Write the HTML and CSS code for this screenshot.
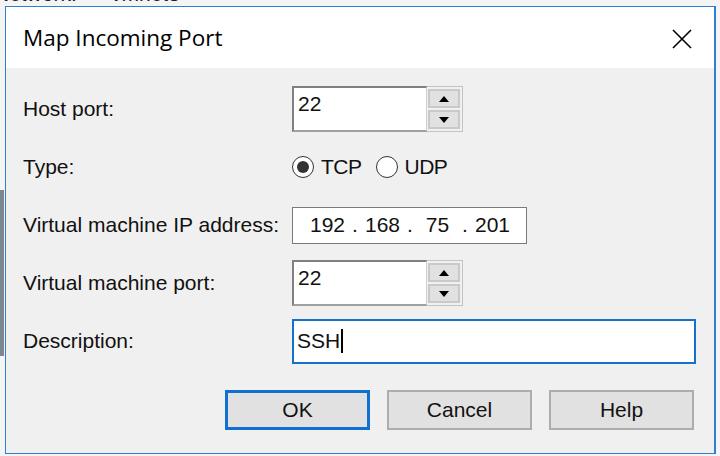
FILE: index.html
```html
<!DOCTYPE html>
<html lang="en">
<head>
  <meta charset="UTF-8" />
  <title>Map Incoming Port</title>
  <link rel="stylesheet" href="styles.css">
</head>
<body>

  <div class="desktop">
    <div class="behind">
      <span class="behind-label">Network:</span>
      <span class="behind-value">vmnet8</span>
    </div>
    <div class="behind-side"></div>

    <div class="dialog">
      <div class="titlebar">
        <span class="title">Map Incoming Port</span>
        <span class="close">
          <svg width="20" height="20" viewBox="0 0 20 20">
            <path d="M1 1 L19 19 M19 1 L1 19" stroke="#000" stroke-width="1.6" fill="none" />
          </svg>
        </span>
      </div>

      <div class="body">
        <div class="fields">
          <div class="label">Host port:</div>
          <div class="spin">
            <div class="box spin-box">22</div>
            <div class="spin-btns">
              <div class="spin-btn"><span class="arrow up"></span></div>
              <div class="spin-btn"><span class="arrow down"></span></div>
            </div>
          </div>

          <div class="label">Type:</div>
          <div class="radios">
            <span class="radio checked"></span><span class="radio-text">TCP</span>
            <span class="radio"></span><span class="radio-text">UDP</span>
          </div>

          <div class="label">Virtual machine IP address:</div>
          <div class="box ip-box">
            <span class="octet">192</span><span class="dot">.</span>
            <span class="octet">168</span><span class="dot">.</span>
            <span class="octet">75</span><span class="dot">.</span>
            <span class="octet">201</span>
          </div>

          <div class="label">Virtual machine port:</div>
          <div class="spin">
            <div class="box spin-box">22</div>
            <div class="spin-btns">
              <div class="spin-btn"><span class="arrow up"></span></div>
              <div class="spin-btn"><span class="arrow down"></span></div>
            </div>
          </div>

          <div class="label">Description:</div>
          <div class="box desc-box">SSH<span class="caret"></span></div>
        </div>

        <div class="buttons">
          <div class="btn default">OK</div>
          <div class="btn">Cancel</div>
          <div class="btn">Help</div>
        </div>
      </div>
    </div>
  </div>

</body>
</html>
```

FILE: styles.css
```css
body {
  margin: 0;
  font-family: "Liberation Sans", Arial, sans-serif;
}
.desktop {
  position: relative;
  width: 720px;
  height: 456px;
  overflow: hidden;
  background: #f4f4f4;
}
.behind {
  display: flex;
  margin-top: -17px;
  font-size: 21px;
  line-height: 22px;
  color: #1a1a3a;
}
.behind-label {
  width: 117px;
  margin-left: -6px;
}
.behind-side {
  width: 4px;
  height: 166px;
  margin-top: 185px;
  background: #7d8590;
}

/* dialog window */
.dialog {
  position: absolute;
  left: 5px;
  top: 6px;
  width: 708px;
  height: 446px;
  border: 1px solid #2f7fcf;
  border-right-width: 2px;
  background: #f0f0f0;
  display: flex;
  flex-direction: column;
}
.titlebar {
  height: 61px;
  background: #fff;
  display: flex;
  align-items: center;
  justify-content: space-between;
  padding: 0 22px 0 17px;
}
.title {
  font-family: "Open Sans", "Noto Sans", sans-serif;
  font-size: 22.5px;
  color: #000;
}
.close {
  display: flex;
  margin-top: 2px;
}

.body {
  padding: 12px 18px 0 17px;
}
.fields {
  display: grid;
  grid-template-columns: 269px 1fr;
  grid-auto-rows: 58px;
  align-items: center;
}
.label {
  font-size: 21px;
  color: #111;
}
.box {
  background: #fff;
  border: 1px solid #7a7a7a;
  font-size: 21px;
  color: #111;
  box-sizing: border-box;
}

/* spinner */
.spin {
  display: flex;
  align-items: stretch;
  height: 46px;
}
.spin-box {
  width: 135px;
  padding: 4px 0 0 4px;
  border-width: 2px 1px 2px 2px;
  border-color: #808080 #d0d0d0 #a0a0a0 #808080;
}
.spin-btns {
  width: 36px;
  border: 1px solid #c3c3c3;
  border-left: none;
  box-sizing: border-box;
  padding: 2px 2px 2px 1px;
  display: flex;
  flex-direction: column;
  gap: 2px;
}
.spin-btn {
  flex: 1;
  background: #e1e1e1;
  border: 2px solid #c9c9c9;
  display: flex;
  align-items: center;
  justify-content: center;
}
.arrow {
  width: 0;
  height: 0;
  border-left: 5px solid transparent;
  border-right: 5px solid transparent;
}
.arrow.up {
  border-bottom: 6px solid #000;
}
.arrow.down {
  border-top: 6px solid #000;
}

/* radios */
.radios {
  display: flex;
  align-items: center;
  font-size: 21px;
  color: #111;
}
.radio {
  width: 22px;
  height: 22px;
  border: 1.5px solid #333;
  border-radius: 50%;
  background: #fff;
  box-sizing: border-box;
  display: flex;
  align-items: center;
  justify-content: center;
  margin-right: 7px;
}
.radio.checked::after {
  content: "";
  width: 12px;
  height: 12px;
  border-radius: 50%;
  background: #333;
}
.radio-text {
  margin-right: 14px;
  letter-spacing: -0.5px;
}

/* ip field */
.ip-box {
  width: 235px;
  height: 37px;
  display: flex;
  align-items: center;
  padding-left: 17px;
}
.octet {
  width: 35px;
  text-align: center;
}
.dot {
  width: 20px;
  text-align: center;
}

/* description */
.desc-box {
  height: 45px;
  border: 2px solid #1572cc;
  display: flex;
  align-items: center;
  padding-left: 3px;
}
.caret {
  width: 2px;
  height: 24px;
  background: #000;
  margin-left: 1px;
}

/* buttons */
.buttons {
  display: flex;
  justify-content: flex-end;
  gap: 17px;
  margin-top: 20px;
  padding-right: 2px;
}
.btn {
  width: 145px;
  height: 40px;
  box-sizing: border-box;
  background: #e1e1e1;
  border: 2px solid #adadad;
  display: flex;
  align-items: center;
  justify-content: center;
  font-size: 21px;
  color: #111;
}
.btn.default {
  border: 3px solid #0f70cf;
}
```
